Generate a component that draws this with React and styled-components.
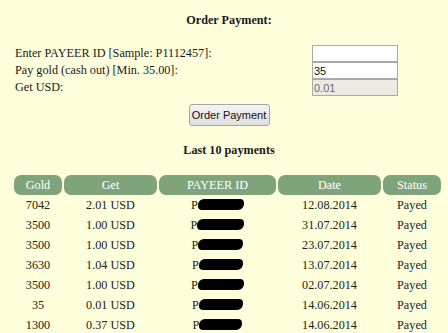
import styled, { createGlobalStyle } from "styled-components";

const GlobalStyle = createGlobalStyle`
  body {
    margin: 0;
    background: #ffffdc;
    font-family: "Liberation Serif", "Times New Roman", serif;
    font-size: 12.2px;
    color: #1a1a1a;
  }
`;

const payments = [
  { gold: "7042", get: "2.01 USD", w: 46, date: "12.08.2014" },
  { gold: "3500", get: "1.00 USD", w: 47, date: "31.07.2014" },
  { gold: "3500", get: "1.00 USD", w: 45, date: "23.07.2014" },
  { gold: "3630", get: "1.04 USD", w: 44, date: "13.07.2014" },
  { gold: "3500", get: "1.00 USD", w: 46, date: "02.07.2014" },
  { gold: "35", get: "0.01 USD", w: 44, date: "14.06.2014" },
  { gold: "1300", get: "0.37 USD", w: 43, date: "14.06.2014" },
];

const App = () => {
  return (
    <Page>
      <GlobalStyle />
      <Title>Order Payment:</Title>
      <Form>
        <FormRow>
          <Label>Enter PAYEER ID [Sample: P1112457]:</Label>
          <Field type="text" defaultValue="" />
        </FormRow>
        <FormRow>
          <Label>Pay gold (cash out) [Min. 35.00]:</Label>
          <Field type="text" defaultValue="35" />
        </FormRow>
        <FormRow>
          <Label>Get USD:</Label>
          <Field type="text" defaultValue="0.01" readOnly $disabled />
        </FormRow>
      </Form>
      <ButtonWrap>
        <OrderButton>Order Payment</OrderButton>
      </ButtonWrap>
      <SubTitle>Last 10 payments</SubTitle>
      <Table>
        <colgroup>
          <col style={{ width: 48 }} />
          <col style={{ width: 93 }} />
          <col style={{ width: 117 }} />
          <col style={{ width: 103 }} />
          <col style={{ width: 58 }} />
        </colgroup>
        <thead>
          <tr>
            <Th>Gold</Th>
            <Th>Get</Th>
            <Th>PAYEER ID</Th>
            <Th>Date</Th>
            <Th>Status</Th>
          </tr>
        </thead>
        <tbody>
          {payments.map((p, i) => (
            <tr key={i}>
              <Td>{p.gold}</Td>
              <Td>{p.get}</Td>
              <Td>
                P<Blot style={{ width: p.w }} />
              </Td>
              <Td>{p.date}</Td>
              <Td>Payed</Td>
            </tr>
          ))}
        </tbody>
      </Table>
    </Page>
  );
};

const Page = styled.div`
  width: 430px;
  margin-left: 14px;
  padding-top: 12px;
`;
const Title = styled.div`
  font-weight: bold;
  text-align: center;
  height: 17px;
  line-height: 17px;
`;
const Form = styled.div`
  margin-top: 16px;
  width: 384px;
  display: flex;
  flex-direction: column;
`;
const FormRow = styled.div`
  display: flex;
  justify-content: space-between;
  align-items: center;
  height: 17px;
`;
const Label = styled.span`
  padding-left: 1px;
  line-height: 17px;
`;
const Field = styled.input`
  box-sizing: border-box;
  width: 86px;
  height: 17px;
  margin: 0;
  border: 1px solid #a9a9a9;
  padding: 0 1px;
  font-family: "Liberation Sans", Arial, sans-serif;
  font-size: 11px;
  color: ${(p) => (p.$disabled ? "#6d6d6d" : "#111")};
  background: ${(p) => (p.$disabled ? "#ebebe4" : "#fff")};
  outline: none;
`;
const ButtonWrap = styled.div`
  display: flex;
  justify-content: center;
  margin-top: 8px;
`;
const OrderButton = styled.button`
  box-sizing: border-box;
  width: 81px;
  height: 22px;
  padding: 0;
  font-family: "Liberation Sans", Arial, sans-serif;
  font-size: 11px;
  color: #111;
  border: 1px solid #a6a6a6;
  border-radius: 3px;
  background: linear-gradient(#f4f4f4, #dedede);
`;
const SubTitle = styled.div`
  font-weight: bold;
  text-align: center;
  margin-top: 16px;
  height: 17px;
  line-height: 17px;
`;
const Table = styled.table`
  margin-top: 16px;
  width: 431px;
  table-layout: fixed;
  border-collapse: separate;
  border-spacing: 2px 0;
  margin-left: -2px;
`;
const Th = styled.th`
  height: 20px;
  padding: 0;
  background: #7fa47c;
  color: #fff;
  font-weight: normal;
  border-radius: 7px;
`;
const Td = styled.td`
  height: 20px;
  padding: 0;
  text-align: center;
  color: #222;
  vertical-align: middle;
`;
const Blot = styled.span`
  display: inline-block;
  height: 11px;
  background: #000;
  border-radius: 6px 4px 6px 4px;
  vertical-align: -1px;
`;

export default App;
